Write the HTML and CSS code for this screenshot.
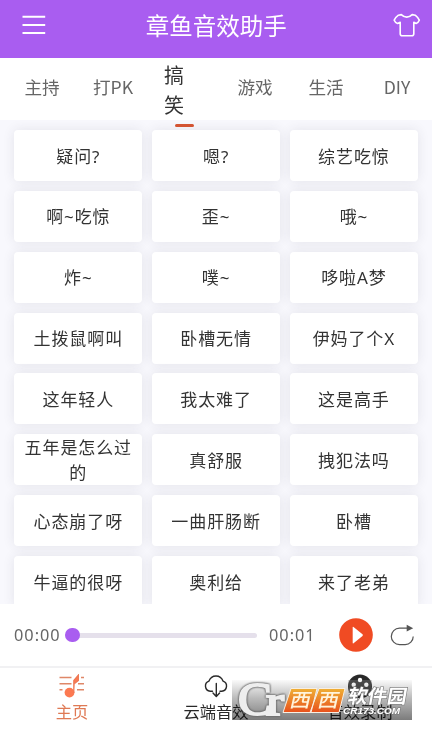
FILE: index.html
```
<!DOCTYPE html>
<html lang="zh-CN">
<head>
<meta charset="utf-8">
<title>章鱼音效助手</title>
<link rel="stylesheet" href="styles.css">
</head>
<body>
<div class="app">
  <header class="header">
    <svg width="24" height="20" viewBox="0 0 24 20" fill="none" stroke="#fff" stroke-width="2"><path d="M.5 1.8h22.7M.5 9.9h22.7M.5 18h22.7"/></svg>
    <h1>章鱼音效助手</h1>
    <svg width="28" height="24" viewBox="0 0 28 24" fill="none" stroke="#fff" stroke-width="1.6" stroke-linejoin="round" stroke-linecap="round"><path d="M8.3 1.6Q13.7 6.8 19.2 1.6L22.2 2.2Q24.8 4.2 26.3 7.2Q25.2 9.8 23.2 10.4L20.8 9.3V20.7Q20.8 22.7 18.8 22.7H9.2Q7.2 22.7 7.2 20.7V9.3L4.5 10.4Q2.3 9.8 1.2 7.2Q2.8 4 5.4 2.2Z"/></svg>
  </header>
  <nav class="tabs">
    <span class="tab">主持</span>
    <span class="tab">打PK</span>
    <span class="tab active"><b>搞笑</b></span>
    <span class="tab">游戏</span>
    <span class="tab">生活</span>
    <span class="tab">DIY</span>
  </nav>
  <main class="sounds">
    <div class="card">疑问?</div><div class="card">嗯?</div><div class="card">综艺吃惊</div>
    <div class="card">啊~吃惊</div><div class="card">歪~</div><div class="card">哦~</div>
    <div class="card">炸~</div><div class="card">噗~</div><div class="card">哆啦A梦</div>
    <div class="card">土拨鼠啊叫</div><div class="card">卧槽无情</div><div class="card">伊妈了个X</div>
    <div class="card">这年轻人</div><div class="card">我太难了</div><div class="card">这是高手</div>
    <div class="card">五年是怎么过的</div><div class="card">真舒服</div><div class="card">拽犯法吗</div>
    <div class="card">心态崩了呀</div><div class="card">一曲肝肠断</div><div class="card">卧槽</div>
    <div class="card">牛逼的很呀</div><div class="card">奥利给</div><div class="card">来了老弟</div>
  </main>
  <section class="player">
    <span class="time">00:00</span>
    <div class="track"><i class="thumb"></i></div>
    <span class="time end">00:01</span>
    <svg class="play" width="34" height="34" viewBox="0 0 34 34"><circle cx="17" cy="17" r="16.8" fill="#f04b23"/><path d="M13.7 9.4v15.4q0 1 .8.4l9-7.3q.8-.8 0-1.6l-9-7.3q-.8-.6-.8.4Z" fill="#fff"/></svg>
    <svg class="repeat" width="25" height="22" viewBox="0 0 25 22" fill="none" stroke="#555" stroke-width="1.2"><path d="M17 4.2H9.5a8.2 8.2 0 0 0 0 16.4h5.7a8.2 8.2 0 0 0 8-8.2"/><path d="M16.7.8v6.8l6.5-3.4Z" fill="#555" stroke="none"/></svg>
  </section>
  <footer class="nav">
    <div class="item current">
      <svg width="26" height="24" viewBox="0 0 26 24"><path d="M.5 3.5h12M.5 9.7h12M.5 15.8h3M22 3.5h3M19 9.7h6M18 15.8h7" stroke="#df8768" stroke-width="1.4"/><circle cx="10.5" cy="18.6" r="4.9" fill="#fc7951"/><path d="M14.8 19V6.5L19.4 1v5.5L15.6 9.5" fill="#fc7951" stroke="#ee7955" stroke-width="1.2"/></svg>
      <span>主页</span>
    </div>
    <div class="item">
      <svg width="26" height="24" viewBox="0 0 26 24" fill="none" stroke="#292929" stroke-width="1.4" stroke-linecap="round" stroke-linejoin="round"><path d="M9.5 17.2H7.2A5.2 5.2 0 0 1 6 7.1C7.2 3.7 9.5 2 13 2s5.8 1.7 7 5.1a5.2 5.2 0 0 1-1.2 10.1H17M13.3 9.5v12.8M10 19l3.3 3.5 3.3-3.5"/></svg>
      <span>云端音效</span>
    </div>
    <div class="item">
      <svg width="26" height="24" viewBox="0 0 26 24"><circle cx="13" cy="12.4" r="12" fill="#292929"/><path d="M1.4 6h23.2v13H1.4Z" fill="#777" opacity=".45"/><g fill="#fff"><circle cx="13" cy="6" r="2.2"/><circle cx="6.7" cy="10.7" r="2.2"/><circle cx="19.3" cy="10.7" r="2.2"/><circle cx="9" cy="18" r="2.2"/><circle cx="17" cy="18" r="2.2"/></g></svg>
      <span>音效录制</span>
    </div>
  </footer>
  <div class="shade"></div>
  <svg class="watermark" width="180" height="40" viewBox="0 0 180 40">
    <defs>
      <linearGradient id="gold" x2="0" y2="1"><stop offset="0" stop-color="#efb035"/><stop offset="1" stop-color="#e8501c"/></linearGradient>
    </defs>
    <g class="monogram"><text x="6" y="34.5" font-size="46" textLength="34" lengthAdjust="spacingAndGlyphs">C</text><text x="34" y="35" font-size="40" textLength="18" lengthAdjust="spacingAndGlyphs">r</text></g>
    <path d="M59 8.5h26l-6 24H51ZM87 8.5h26l-6 24H78Z" fill="url(#gold)" stroke="#f8efe3" stroke-width="1"/>
    <g class="brand" transform="skewX(-13)"><text x="63" y="27.5" font-size="19" textLength="21" lengthAdjust="spacingAndGlyphs">西</text><text x="91" y="27.5" font-size="19" textLength="21" lengthAdjust="spacingAndGlyphs">西</text></g>
    <g class="brand outlined" transform="skewX(-10)"><text x="119" y="23" font-size="19" textLength="59" lengthAdjust="spacingAndGlyphs">软件园</text></g>
    <text class="domain" x="111" y="33.5" font-size="9.5" textLength="57" lengthAdjust="spacingAndGlyphs">CR173.COM</text>
  </svg>
</div>
</body>
</html>
```
FILE: styles.css
```
* { box-sizing: border-box; }
body {
  margin: 0;
  font-family: "Noto Sans", "Noto Sans CJK SC", sans-serif;
  color: #333;
}
.app {
  position: relative;
  width: 432px;
  height: 730px;
  overflow: hidden;
  display: flex;
  flex-direction: column;
  background: #fff;
}
.header {
  flex: none;
  height: 58px;
  padding: 0 11px 8px 21.5px;
  display: flex;
  align-items: center;
  justify-content: space-between;
  background: #a95df0;
  color: #fff;
}
.header h1 {
  margin: 0 6px 0 0;
  font: 400 23.5px/34px "Noto Sans CJK SC", sans-serif;
}
.tabs {
  flex: none;
  height: 62px;
  padding: 0 0 4px 6.5px;
  display: grid;
  grid-template-columns: repeat(6, 71px);
  align-items: center;
  position: relative;
  z-index: 1;
}
.tab {
  padding-bottom: 5px;
  text-align: center;
  font-family: "Noto Sans CJK SC", sans-serif;
  font-size: 17.6px;
  line-height: 26px;
  color: #666;
}
.active {
  position: relative;
  padding: 2px 0 0;
  color: #333;
  font-size: 20px;
  line-height: 30px;
}
.active b {
  display: block;
  width: 20px;
  margin-left: 15.5px;
  font-weight: 400;
}
.active::after {
  content: "";
  position: absolute;
  left: 26px;
  bottom: -7px;
  width: 19px;
  height: 3px;
  border-radius: 2px;
  background: #d35432;
}
.sounds {
  flex: none;
  height: 484px;
  padding: 10px 14px 0 14.3px;
  display: grid;
  grid-template-columns: repeat(3, 128px);
  grid-auto-rows: 51px;
  gap: 9.86px 9.8px;
  align-content: start;
  overflow: hidden;
  background: #f8f8fd;
}
.card {
  display: flex;
  align-items: center;
  justify-content: center;
  padding: 1px 9px 0;
  border-radius: 4px;
  background: #fff;
  box-shadow: 0 0 12px rgba(50, 50, 65, .1);
  font-size: 17px;
  letter-spacing: .9px;
  line-height: 25px;
  text-align: center;
}
.player {
  flex: none;
  height: 64px;
  padding: 0 16px 0 14px;
  display: flex;
  align-items: center;
  border-bottom: 2px solid #f1f1f3;
}
.time {
  width: 51px;
  font-size: 16.3px;
  letter-spacing: 1px;
  color: #666;
}
.track {
  position: relative;
  width: 192px;
  height: 5px;
  border-radius: 3px;
  background: #e5e0eb;
}
.thumb {
  position: absolute;
  left: 0;
  top: -5px;
  width: 14.5px;
  height: 14.5px;
  border-radius: 50%;
  background: #a95df0;
}
.end { margin-left: 12px; }
.play { margin-left: 19px; }
.repeat { margin-left: 17px; }
.nav {
  flex: 1;
  display: grid;
  grid-template-columns: repeat(3, 144px);
}
.item {
  padding-top: 6px;
  display: flex;
  flex-direction: column;
  align-items: center;
  font: 16.3px/24px "Noto Sans CJK SC", sans-serif;
  color: #292929;
}
.item span { margin-top: 1px; }
.current { color: #df7954; }
.shade, .watermark {
  position: absolute;
  left: 232px;
  top: 680px;
}
.shade {
  width: 180px;
  height: 40px;
  background: linear-gradient(#fafafa, #bbb 45%, #7c7c7c);
  mix-blend-mode: multiply;
}
.monogram {
  font-family: "Liberation Serif", serif;
  font-weight: 400;
  fill: #eee;
  stroke: #eee;
  stroke-width: 2px;
  filter: drop-shadow(0 0 .8px #555) drop-shadow(0 0 .6px #777);
}
.brand {
  font-family: "Noto Sans CJK SC", sans-serif;
  font-weight: 500;
  fill: #fff4dc;
}
.outlined, .domain {
  fill: #fff;
  font-weight: 700;
  stroke: #777;
  stroke-width: 1.2px;
  paint-order: stroke;
}
.domain {
  font-family: "Liberation Sans", sans-serif;
  font-style: italic;
}
```
